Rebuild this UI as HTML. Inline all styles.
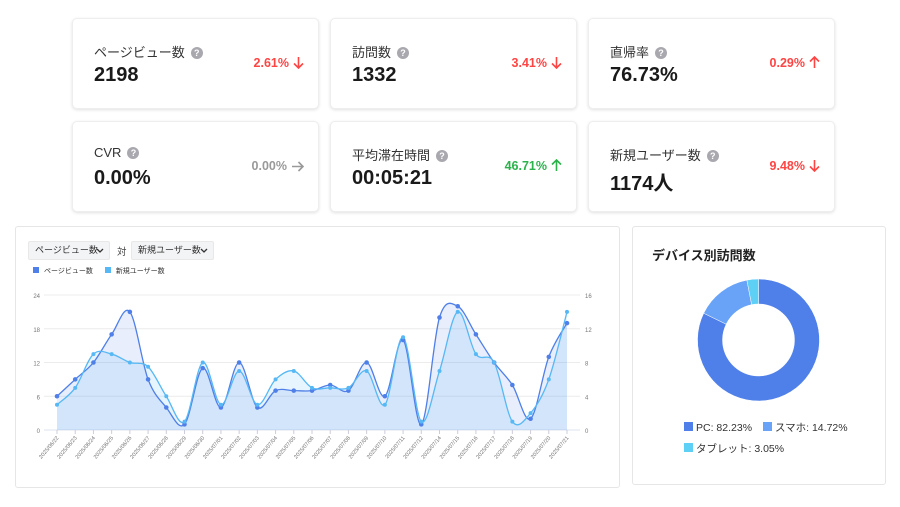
<!DOCTYPE html>
<html><head><meta charset="utf-8">
<style>
*{box-sizing:border-box;margin:0;padding:0}
body{width:900px;height:507px;background:#fff;font-family:"Liberation Sans","Noto Sans CJK JP",sans-serif;color:#222;position:relative;overflow:hidden}
.card{position:absolute;width:247px;height:91px;background:#fff;border-radius:5px;box-shadow:0 1px 3px rgba(0,0,0,.12);border:1px solid #eee}
.lbl{position:absolute;left:21px;top:23px;font-size:13px;color:#333}
.q{display:inline-block;width:12px;height:12px;border-radius:50%;background:#a8a8ae;color:#fff;font-size:9px;text-align:center;line-height:12px;font-weight:bold;margin-left:6px;vertical-align:1px}
.val{position:absolute;left:21px;top:45px;font-size:20px;font-weight:bold;color:#1a1a1a}
.chg{position:absolute;right:14px;top:37px;font-size:12.5px;font-weight:bold}
.chg svg{vertical-align:-2px;margin-left:4px}
.red{color:#f44}.green{color:#2bb24c}.gray{color:#999}
.panel{position:absolute;background:#fff;border:1px solid #e6e6e6;border-radius:3px}
.sel{position:absolute;top:241px;height:19px;background:#f3f4f6;border:1px solid #e8e8e8;border-radius:2px;font-size:9px;line-height:17px;padding-left:6px;color:#333;white-space:nowrap}
.sel svg{position:absolute;right:5px;top:6px}
</style></head><body>
<div class="card" style="left:72px;top:18px"><div class="lbl">ページビュー数<span class="q">?</span></div><div class="val">2198</div><div class="chg red">2.61%<svg width="11" height="13" viewBox="0 0 11 13"><path d="M5.5 1V12M1 7.5L5.5 12L10 7.5" fill="none" stroke="currentColor" stroke-width="1.6"/></svg></div></div>
<div class="card" style="left:330px;top:18px"><div class="lbl">訪問数<span class="q">?</span></div><div class="val">1332</div><div class="chg red">3.41%<svg width="11" height="13" viewBox="0 0 11 13"><path d="M5.5 1V12M1 7.5L5.5 12L10 7.5" fill="none" stroke="currentColor" stroke-width="1.6"/></svg></div></div>
<div class="card" style="left:588px;top:18px"><div class="lbl">直帰率<span class="q">?</span></div><div class="val">76.73%</div><div class="chg red">0.29%<svg width="11" height="13" viewBox="0 0 11 13"><path d="M5.5 12V1M1 5.5L5.5 1L10 5.5" fill="none" stroke="currentColor" stroke-width="1.6"/></svg></div></div>
<div class="card" style="left:72px;top:121px"><div class="lbl">CVR<span class="q">?</span></div><div class="val">0.00%</div><div class="chg gray">0.00%<svg width="13" height="11" viewBox="0 0 13 11"><path d="M1 5.5H12M7.5 1L12 5.5L7.5 10" fill="none" stroke="currentColor" stroke-width="1.6"/></svg></div></div>
<div class="card" style="left:330px;top:121px"><div class="lbl">平均滞在時間<span class="q">?</span></div><div class="val">00:05:21</div><div class="chg green">46.71%<svg width="11" height="13" viewBox="0 0 11 13"><path d="M5.5 12V1M1 5.5L5.5 1L10 5.5" fill="none" stroke="currentColor" stroke-width="1.6"/></svg></div></div>
<div class="card" style="left:588px;top:121px"><div class="lbl">新規ユーザー数<span class="q">?</span></div><div class="val">1174人</div><div class="chg red">9.48%<svg width="11" height="13" viewBox="0 0 11 13"><path d="M5.5 1V12M1 7.5L5.5 12L10 7.5" fill="none" stroke="currentColor" stroke-width="1.6"/></svg></div></div>

<div class="panel" style="left:15px;top:226px;width:605px;height:262px"></div>
<div class="sel" style="left:28px;width:82px">ページビュー数<svg width="8" height="5" viewBox="0 0 8 5"><path d="M1 1L4 4L7 1" fill="none" stroke="#333" stroke-width="1.3"/></svg></div>
<div style="position:absolute;left:117px;top:244px;font-size:9.5px;color:#444">対</div>
<div class="sel" style="left:131px;width:83px">新規ユーザー数<svg width="8" height="5" viewBox="0 0 8 5"><path d="M1 1L4 4L7 1" fill="none" stroke="#333" stroke-width="1.3"/></svg></div>
<div style="position:absolute;left:33px;top:266px;font-size:7px;color:#333;white-space:nowrap"><span style="display:inline-block;width:6px;height:6px;background:#4f7fe8;margin-right:5px"></span>ページビュー数 <span style="display:inline-block;width:6px;height:6px;background:#56b8f5;margin:0 5px 0 10px"></span>新規ユーザー数</div>
<svg id="ch" style="position:absolute;left:0;top:0" width="620" height="490"></svg>

<div class="panel" style="left:632px;top:226px;width:254px;height:259px"></div>
<div style="position:absolute;left:652px;top:245px;font-size:13px;font-weight:bold;color:#222">デバイス別訪問数</div>
<svg id="dn" style="position:absolute;left:0;top:0" width="900" height="507"></svg>
<div style="position:absolute;left:684px;top:420px;font-size:10.5px;color:#333;white-space:nowrap"><span style="display:inline-block;width:9px;height:9px;background:#4f7fe8;margin-right:3px"></span>PC: 82.23% <span style="display:inline-block;width:9px;height:9px;background:#69a3f7;margin:0 3px 0 8px"></span>スマホ: 14.72%</div>
<div style="position:absolute;left:684px;top:441px;font-size:10.5px;color:#333;white-space:nowrap"><span style="display:inline-block;width:9px;height:9px;background:#5ecff5;margin-right:3px"></span>タブレット: 3.05%</div>

<script>
const NS="http://www.w3.org/2000/svg";
function el(p,t,a,txt){const e=document.createElementNS(NS,t);for(const k in a)e.setAttribute(k,a[k]);if(txt!=null)e.textContent=txt;p.appendChild(e);return e;}
const ch=document.getElementById('ch');
const x0=57,x1=567,yb=430,yt=295;
const dates=["06/22","06/23","06/24","06/25","06/26","06/27","06/28","06/29","06/30","07/01","07/02","07/03","07/04","07/05","07/06","07/07","07/08","07/09","07/10","07/11","07/12","07/14","07/15","07/16","07/17","07/18","07/19","07/20","07/21"];
const pv=[6,9,12,17,21,9,4,1,11,4,12,4,7,7,7,8,7,12,6,16,1,20,22,17,12,8,2,13,19];
const nu=[3,5,9,9,8,7.5,4,1,8,3,7,3,6,7,5,5,5,7,3,11,1,7,14,9,8,1,2,6,14];
const n=dates.length,dx=(x1-x0)/(n-1);
for(let i=0;i<=4;i++){const y=yb-i*(yb-yt)/4;
 el(ch,'line',{x1:44,x2:580,y1:y,y2:y,stroke:i==0?'#dde3ee':'#ececec','stroke-width':1});
 el(ch,'text',{x:40,y:y+3,'font-size':6,fill:'#777','text-anchor':'end'},String(i*6));
 el(ch,'text',{x:585,y:y+3,'font-size':6,fill:'#777'},String(i*4));}
function pts(a,mx){return a.map((v,i)=>[x0+i*dx,yb-v*(yb-yt)/mx]);}
function path(p){let d=`M${p[0][0]},${p[0][1]}`;for(let i=0;i<p.length-1;i++){const p0=p[i-1]||p[i],p1=p[i],p2=p[i+1],p3=p[i+2]||p2;
 d+=` C${p1[0]+(p2[0]-p0[0])/6},${p1[1]+(p2[1]-p0[1])/6} ${p2[0]-(p3[0]-p1[0])/6},${p2[1]-(p3[1]-p1[1])/6} ${p2[0]},${p2[1]}`;}return d;}
const P=pts(pv,24),N=pts(nu,16);
el(ch,'path',{d:path(N)+` L${x1},${yb} L${x0},${yb}Z`,fill:'rgba(86,184,245,0.14)'});
el(ch,'path',{d:path(P)+` L${x1},${yb} L${x0},${yb}Z`,fill:'rgba(79,127,232,0.13)'});
el(ch,'path',{d:path(P),fill:'none',stroke:'#4f7fe8','stroke-width':1.3});
el(ch,'path',{d:path(N),fill:'none',stroke:'#56b8f5','stroke-width':1.3});
P.forEach(p=>el(ch,'circle',{cx:p[0],cy:p[1],r:2.3,fill:'#4f7fe8'}));
N.forEach(p=>el(ch,'circle',{cx:p[0],cy:p[1],r:2,fill:'#56b8f5'}));
dates.forEach((d,i)=>{const x=x0+i*dx;el(ch,'line',{x1:x,x2:x,y1:yb,y2:yb+4,stroke:'#ccd','stroke-width':1});
 el(ch,'text',{x:x+2,y:yb+8,'font-size':5.5,fill:'#777','text-anchor':'end',transform:`rotate(-50 ${x+2} ${yb+8})`},'2025/'+d);});
const dn=document.getElementById('dn');
const cx=758.5,cy=340,R=61,r=36;
let a=-Math.PI/2;
[[82.23,'#4f7fe8'],[14.72,'#69a3f7'],[3.05,'#5ecff5']].forEach(([v,c])=>{const b=a+v/100*2*Math.PI;const L=b-a>Math.PI?1:0;
 const f=(rr,t)=>`${cx+rr*Math.cos(t)},${cy+rr*Math.sin(t)}`;
 el(dn,'path',{d:`M${f(R,a)} A${R},${R} 0 ${L} 1 ${f(R,b)} L${f(r,b)} A${r},${r} 0 ${L} 0 ${f(r,a)}Z`,fill:c,stroke:'#fff','stroke-width':0.5});a=b;});
</script>
</body></html>
